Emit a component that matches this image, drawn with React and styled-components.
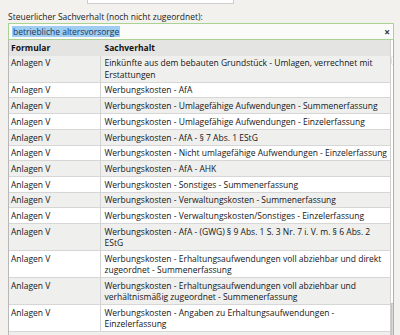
import React from "react";
import styled, { createGlobalStyle } from "styled-components";

const GlobalStyle = createGlobalStyle`
  html, body {
    margin: 0;
    padding: 0;
    background: #f2f1ee;
  }
  body {
    font-family: "Open Sans", "Liberation Sans", sans-serif;
    font-size: 8.5px;
    color: #161616;
    overflow: hidden;
  }
`;

const Page = styled.div`
  height: 335px;
  box-sizing: border-box;
  padding: 0 6px 0 8px;
  display: flex;
  flex-direction: column;
  overflow: hidden;
`;

const TopField = styled.div`
  margin-left: 79px;
  width: 145px;
  height: 3px;
  background: #fff;
  border: 1px solid #cdcdcd;
  border-top: none;
`;

const Label = styled.div`
  margin-top: 7px;
  line-height: 12px;
  color: #222;
`;

const SearchBox = styled.div`
  height: 17px;
  box-sizing: border-box;
  border: 1px solid #a9d393;
  background: #fbfbf9;
  display: flex;
  align-items: center;
  padding: 0 3px 0 3px;
`;

const Selected = styled.span`
  background: #9fcdf2;
  color: #17375f;
  line-height: 11px;
  padding: 0 1px;
`;

const Clear = styled.span`
  margin-left: auto;
  color: #333;
  font-size: 10px;
  font-weight: 700;
  line-height: 10px;
`;

const ListFrame = styled.div`
  flex: 1;
  min-height: 0;
  display: flex;
  background: #efefed;
  border-left: 1px solid #b8b8b8;
  border-right: 1px solid #9fb3c8;
  overflow: hidden;
`;

const Grid = styled.div`
  flex: 1;
  display: grid;
  grid-template-columns: 92px 1fr;
  align-content: start;
`;

const HeadCell = styled.div`
  background: #e4e4e3;
  font-weight: 700;
  color: #111;
  line-height: 11.5px;
  padding: 1.6px 3px 1.6px ${(p) => (p.$first ? "2px" : "3.5px")};
  border-bottom: 1px solid #e4e4e3;
  border-right: ${(p) => (p.$first ? "1px solid #e4e4e3" : "none")};
`;

const Cell = styled.div`
  background: ${(p) => (p.$odd ? "#ffffff" : "#efefed")};
  line-height: 11.4px;
  padding: 1.7px 3px 1.6px ${(p) => (p.$first ? "2px" : "3.5px")};
  border-bottom: 1px solid #d6d6d6;
  border-right: ${(p) => (p.$first ? "1px solid #d3d3d3" : "none")};
  white-space: nowrap;
`;

const Scrollbar = styled.div`
  width: 10px;
  background: #fff;
  border-left: 1px solid #cfcfcf;
  display: flex;
  flex-direction: column;
  align-items: center;
`;

const ArrowBox = styled.div`
  margin-top: 16px;
  width: 9px;
  height: 9px;
  display: flex;
  align-items: center;
  justify-content: center;
`;

const Thumb = styled.div`
  margin-top: auto;
  width: 100%;
  height: 32px;
  background: #d9d9d9;
  border-top: 1px solid #c4c4c4;
  border-left: 1px solid #c4c4c4;
  box-sizing: border-box;
`;

const rows = [
  ["Einkünfte aus dem bebauten Grundstück - Umlagen, verrechnet mit", "Erstattungen"],
  ["Werbungskosten - AfA"],
  ["Werbungskosten - Umlagefähige Aufwendungen - Summenerfassung"],
  ["Werbungskosten - Umlagefähige Aufwendungen - Einzelerfassung"],
  ["Werbungskosten - AfA - § 7 Abs. 1 EStG"],
  ["Werbungskosten - Nicht umlagefähige Aufwendungen - Einzelerfassung"],
  ["Werbungskosten - AfA - AHK"],
  ["Werbungskosten - Sonstiges - Summenerfassung"],
  ["Werbungskosten - Verwaltungskosten - Summenerfassung"],
  ["Werbungskosten - Verwaltungskosten/Sonstiges - Einzelerfassung"],
  ["Werbungskosten - AfA - (GWG) § 9 Abs. 1 S. 3 Nr. 7 i. V. m. § 6 Abs. 2", "EStG"],
  ["Werbungskosten - Erhaltungsaufwendungen voll abziehbar und direkt", "zugeordnet - Summenerfassung"],
  ["Werbungskosten - Erhaltungsaufwendungen voll abziehbar und", "verhältnismäßig zugeordnet - Summenerfassung"],
  ["Werbungskosten - Angaben zu Erhaltungsaufwendungen -", "Einzelerfassung"],
];

export default function App() {
  return (
    <>
      <GlobalStyle />
      <Page>
        <TopField />
        <Label>Steuerlicher Sachverhalt (noch nicht zugeordnet):</Label>
        <SearchBox>
          <Selected>betriebliche altersvorsorge</Selected>
          <Clear>×</Clear>
        </SearchBox>
        <ListFrame>
          <Grid>
            <HeadCell $first>Formular</HeadCell>
            <HeadCell>Sachverhalt</HeadCell>
            {rows.map((lines, i) => (
              <React.Fragment key={i}>
                <Cell $first $odd={i % 2 === 1}>Anlagen V</Cell>
                <Cell $odd={i % 2 === 1}>
                  {lines.map((l, j) => (
                    <div key={j}>{l}</div>
                  ))}
                </Cell>
              </React.Fragment>
            ))}
          </Grid>
          <Scrollbar>
            <ArrowBox>
              <svg width="9" height="9" viewBox="0 0 9 9">
                <rect x="0.5" y="0.5" width="8" height="8" rx="1" fill="#fff" stroke="#e2e2e2" />
                <path d="M2.5 5.5 L4.5 3.5 L6.5 5.5" fill="none" stroke="#6a6a6a" strokeWidth="1" />
              </svg>
            </ArrowBox>
            <Thumb />
          </Scrollbar>
        </ListFrame>
      </Page>
    </>
  );
}
